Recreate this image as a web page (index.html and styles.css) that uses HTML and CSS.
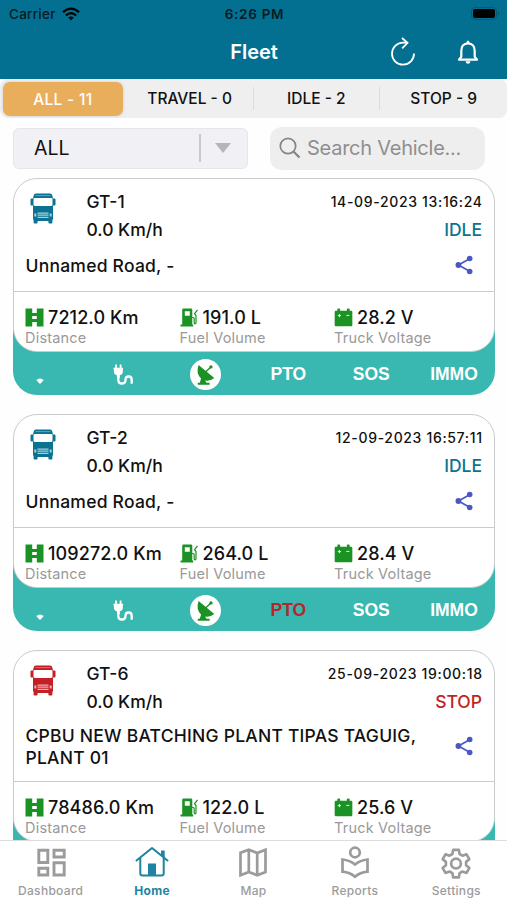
FILE: index.html
```html
<!DOCTYPE html>
<html lang="en">
<head>
  <meta charset="UTF-8">
  <meta name="viewport" content="width=device-width, initial-scale=1.0">
  <title>Fleet</title>
  <link rel="stylesheet" href="styles.css">
</head>
<body>

  <!-- Icons -->
  <svg class="sprite" width="0" height="0">
    <symbol id="i-truck" viewBox="0 0 26 31">
      <path fill="currentColor" d="M6 .5h14q2 0 2.300 2l.7 3h1.500q1 0 1 1v5q0 1-1 1H23v14h-.6v3q0 1-1 1h-2q-1 0-1-1v-1.500H7.600v1.500q0 1-1 1h-2q-1 0-1-1v-3H3v-14H1.500q-1 0-1-1v-5q0-1 1-1H3l.7-3Q4 .5 6 .5z"/>
      <path fill="#fff" d="M4.500 5h17q1 0 1 1v5.500q0 1.500-1.500 1.500H5q-1.500 0-1.500-1.500V6q0-1 1-1z"/>
      <path stroke="#fff" stroke-opacity=".5" stroke-width=".7" d="M5.500 2.600h15"/>
      <path fill="#fff" fill-opacity=".65" d="M7.500 19.500h11v1.200h-11zM7.500 21.600h11v1.200h-11zM7.500 23.700h11v1.200h-11zM4.300 20.500h2v3h-2zM19.700 20.500h2v3h-2z"/>
    </symbol>
    <symbol id="i-share" viewBox="0 0 18 20">
      <path fill="none" stroke="currentColor" stroke-width="1.700" d="M15 3.500 3.500 10 15 16.500"/>
      <circle cx="14.700" cy="3.500" r="2.800" fill="currentColor"/>
      <circle cx="3.400" cy="10" r="2.900" fill="currentColor"/>
      <circle cx="14.700" cy="16.500" r="2.800" fill="currentColor"/>
    </symbol>
    <symbol id="i-road" viewBox="0 0 19 19">
      <path fill="currentColor" d="M.5.5h6.700v18H.5zM11.800.5h6.700v18h-6.700zM7 5h5v3H7zM7 11h5v3H7z"/>
    </symbol>
    <symbol id="i-fuel" viewBox="0 0 19 19">
      <path fill="currentColor" fill-rule="evenodd" d="M3.500.5h7.500q1.300 0 1.300 1.300V16.500h.9v2H.5v-2h1.700V1.800Q2.200.5 3.500.5zM4.800 3.300v4.500h5V3.300z"/>
      <path fill="none" stroke="currentColor" stroke-width="1.200" d="M12 9.500h1.200q1 0 1 1v4q0 1.400.9 1.400t.9-1.400V7.500l-1.500-1.800 3-3.700"/>
    </symbol>
    <symbol id="i-battery" viewBox="0 0 20 20">
      <path fill="currentColor" d="M3.500 3V1.500q0-1 1-1h1q1 0 1 1V3h7V1.500q0-1 1-1h1q1 0 1 1V3H18q1.300 0 1.300 1.300v13.500q0 1.300-1.300 1.300H2Q.7 19.100.7 17.800V4.300Q.7 3 2 3z"/>
      <path stroke="#fff" stroke-width="1" d="M4 8h3.400M5.700 6.300v3.400M13 7.800h3.200"/>
    </symbol>
    <symbol id="i-signal" viewBox="0 0 8 6">
      <path fill="#fff" d="M.3 2Q4-1 7.700 2L4.600 5.500q-.6.500-1.200 0z"/>
    </symbol>
    <symbol id="i-plug" viewBox="0 0 20 21">
      <path fill="#fff" d="M2.100.5h1.800V4H2.100zM6.700.5h1.800V4H6.700zM.5 3.800H10V5.600H9.800v2.200q0 2.800-3 3.500V14H3.900v-2.700Q.9 10.600.9 7.800V5.600H.5z"/>
      <path fill="none" stroke="#fff" stroke-width="2.300" d="M5.300 12.500v3.200q0 3.800 3.600 3.800t3.600-3.800q0-3.200 3.100-3.200t3.100 3.200v4"/>
    </symbol>
    <symbol id="i-dish" viewBox="0 0 30 30">
      <circle cx="15" cy="15" r="15" fill="#fff"/>
      <path fill="#1b9224" d="M8.300 5.800 23.500 18.500Q19 22 14.500 20.800l1.500 2.200h3v2H7.500v-2h2l1.200-4.200Q5.500 14 8.300 5.800z"/>
      <path stroke="#1b9224" stroke-width="1.400" d="m15 12.500 5-4.500"/>
      <circle cx="20.300" cy="7.700" r="1.600" fill="#1b9224"/>
    </symbol>
  </svg>

  <header class="header">
    <div class="status-bar">
      <div class="carrier">Carrier
        <svg width="18" height="14" viewBox="0 0 18 14">
          <path fill="none" stroke="#000" stroke-width="2.300" d="M1 5.200q8-7.200 16 0M3.900 8.300q5.100-4.400 10.200 0"/>
          <path d="M6.200 10.600Q9 8.300 11.800 10.600L9 13.600z"/>
        </svg>
      </div>
      <div class="time">6:26 PM</div>
      <svg class="phone-battery" width="29" height="13" viewBox="0 0 29 13">
        <rect x=".5" y=".5" width="25" height="12" rx="3.500" fill="none" stroke="#035a75"/>
        <rect x="2" y="2" width="22" height="9" rx="2"/>
        <path fill="#034f66" d="M27 4.500q2 2 0 4z"/>
      </svg>
    </div>
    <div class="title-bar">
      <h1 class="title">Fleet</h1>
      <svg width="26" height="30" viewBox="0 0 26 30" fill="none" stroke="#fff" stroke-width="1.800">
        <path d="M24 16.500A11 11 0 1 1 13 5.700h4.300M12 1l5.500 4.800-5.300 5.500"/>
      </svg>
      <svg width="22" height="24" viewBox="0 0 22 24">
        <path fill="none" stroke="#fff" stroke-width="2.200" stroke-linejoin="round" d="M2 19.700h18l-2.300-3V11q0-7.500-6.700-7.500T4.300 11v5.700z"/>
        <path fill="#fff" d="M9.400 3.200q0-2.700 1.600-2.700t1.600 2.700zM8.500 21.300h5q-.5 2.500-2.500 2.500t-2.500-2.500z"/>
      </svg>
    </div>
  </header>

  <nav class="tabs">
    <a class="tab active">ALL - 11</a>
    <a class="tab">TRAVEL - 0</a>
    <a class="tab">IDLE - 2</a>
    <a class="tab">STOP - 9</a>
  </nav>

  <div class="filters">
    <div class="select">
      <span>ALL</span>
      <i class="caret"></i>
    </div>
    <div class="search">
      <svg width="22" height="22" viewBox="0 0 22 22" fill="none" stroke="#858587" stroke-width="1.700">
        <circle cx="9" cy="9" r="7.700"/>
        <path stroke-width="2.200" d="m14.500 14.500 6 6"/>
      </svg>
      <span>Search Vehicle...</span>
    </div>
  </div>

  <main class="list">

    <!-- GT-1 -->
    <section class="vehicle">
      <div class="card">
        <div class="card-top idle">
          <svg class="truck"><use href="#i-truck"/></svg>
          <div class="who"><p>GT-1</p><p>0.0 Km/h</p></div>
          <div class="when"><p class="date">14-09-2023 13:16:24</p><p class="state">IDLE</p></div>
        </div>
        <div class="address">
          <p>Unnamed Road, -</p>
          <svg class="share"><use href="#i-share"/></svg>
        </div>
        <div class="stats">
          <div><p class="value"><svg><use href="#i-road"/></svg>7212.0 Km</p><p class="label">Distance</p></div>
          <div><p class="value"><svg><use href="#i-fuel"/></svg>191.0 L</p><p class="label">Fuel Volume</p></div>
          <div><p class="value"><svg><use href="#i-battery"/></svg>28.2 V</p><p class="label">Truck Voltage</p></div>
        </div>
      </div>
      <div class="flags">
        <span><svg class="signal"><use href="#i-signal"/></svg></span>
        <span><svg class="plug"><use href="#i-plug"/></svg></span>
        <span><svg class="dish"><use href="#i-dish"/></svg></span>
        <span>PTO</span>
        <span>SOS</span>
        <span>IMMO</span>
      </div>
    </section>

    <!-- GT-2 -->
    <section class="vehicle">
      <div class="card">
        <div class="card-top idle">
          <svg class="truck"><use href="#i-truck"/></svg>
          <div class="who"><p>GT-2</p><p>0.0 Km/h</p></div>
          <div class="when"><p class="date">12-09-2023 16:57:11</p><p class="state">IDLE</p></div>
        </div>
        <div class="address">
          <p>Unnamed Road, -</p>
          <svg class="share"><use href="#i-share"/></svg>
        </div>
        <div class="stats">
          <div><p class="value"><svg><use href="#i-road"/></svg>109272.0 Km</p><p class="label">Distance</p></div>
          <div><p class="value"><svg><use href="#i-fuel"/></svg>264.0 L</p><p class="label">Fuel Volume</p></div>
          <div><p class="value"><svg><use href="#i-battery"/></svg>28.4 V</p><p class="label">Truck Voltage</p></div>
        </div>
      </div>
      <div class="flags">
        <span><svg class="signal"><use href="#i-signal"/></svg></span>
        <span><svg class="plug"><use href="#i-plug"/></svg></span>
        <span><svg class="dish"><use href="#i-dish"/></svg></span>
        <span class="on">PTO</span>
        <span>SOS</span>
        <span>IMMO</span>
      </div>
    </section>

    <!-- GT-6 -->
    <section class="vehicle">
      <div class="card">
        <div class="card-top stop">
          <svg class="truck"><use href="#i-truck"/></svg>
          <div class="who"><p>GT-6</p><p>0.0 Km/h</p></div>
          <div class="when"><p class="date">25-09-2023 19:00:18</p><p class="state">STOP</p></div>
        </div>
        <div class="address">
          <p>CPBU NEW BATCHING PLANT TIPAS TAGUIG,<br>PLANT 01</p>
          <svg class="share"><use href="#i-share"/></svg>
        </div>
        <div class="stats">
          <div><p class="value"><svg><use href="#i-road"/></svg>78486.0 Km</p><p class="label">Distance</p></div>
          <div><p class="value"><svg><use href="#i-fuel"/></svg>122.0 L</p><p class="label">Fuel Volume</p></div>
          <div><p class="value"><svg><use href="#i-battery"/></svg>25.6 V</p><p class="label">Truck Voltage</p></div>
        </div>
      </div>
      <div class="flags"></div>
    </section>

  </main>

  <nav class="bottom-nav">
    <a class="nav-item">
      <svg viewBox="0 0 34 34" fill="none" stroke="currentColor" stroke-width="2.900">
        <path d="M4.800 4.300h9v12.200h-9zM20 4.300h10.200v6.700H20zM4.800 22.300h9v6.700h-9zM20 16.800h10.200V29H20z"/>
      </svg>
      <span>Dashboard</span>
    </a>
    <a class="nav-item active">
      <svg viewBox="0 0 34 34" fill="none" stroke="currentColor" stroke-width="2">
        <path stroke-linecap="round" stroke-linejoin="round" d="M1.500 14.500 17 2l15.500 12.500M5.300 12v15.200q0 2.300 2.300 2.300h18.800q2.300 0 2.300-2.300V12"/>
        <path fill="currentColor" stroke="none" d="M13 17.500h8v12h-8zM26 4.500h3.700v8L26 9.500z"/>
      </svg>
      <span>Home</span>
    </a>
    <a class="nav-item">
      <svg viewBox="0 0 34 34" fill="none" stroke="currentColor" stroke-width="2.700">
        <path d="M4.500 6.800v22.400l8.300-3.200 8.400 3.200 8.300-3.200V3.800L21.200 7l-8.400-3.200zM12.800 4v22M21.200 7v22"/>
      </svg>
      <span>Map</span>
    </a>
    <a class="nav-item">
      <svg viewBox="0 0 34 34" fill="none" stroke="currentColor" stroke-width="2.700">
        <circle cx="17" cy="6.500" r="4.800"/>
        <path d="M4.500 13.500q7.500.8 12.500 5 5-4.200 12.500-5v12.200q-7.500.8-12.500 5-5-4.200-12.500-5z"/>
      </svg>
      <span>Reports</span>
    </a>
    <a class="nav-item">
      <svg viewBox="0 0 34 34" fill="none" stroke="currentColor" stroke-width="2.700" stroke-linejoin="round">
        <path d="M14.200 3.800h5.600l.8 4.200 2.900 1.700 4-1.400 2.800 4.900-3.200 2.700v3.400l3.200 2.700-2.800 4.900-4-1.400-2.900 1.700-.8 4.200h-5.600l-.8-4.200-2.900-1.700-4 1.400-2.800-4.900 3.200-2.700v-3.400l-3.200-2.700 2.800-4.900 4 1.400L13.400 8z"/>
        <circle cx="17" cy="17.600" r="4.900"/>
      </svg>
      <span>Settings</span>
    </a>
  </nav>

</body>
</html>
```

FILE: styles.css
```css
* { margin: 0; padding: 0; box-sizing: border-box; }
body {
  height: 900px;
  background: #fefefe;
  font-family: Inter, "Liberation Sans", sans-serif;
  color: #111;
  overflow: hidden;
  display: flex;
  flex-direction: column;
}
.sprite { position: absolute; }
svg { flex: none; }

/* Header */
.header {
  height: 79px;
  flex: none;
  background: #037092;
}
.status-bar {
  height: 27px;
  display: grid;
  grid-template-columns: 1fr auto 1fr;
  align-items: center;
  padding: 0 7px 0 9px;
  font-size: 13.5px;
  color: #061b23;
}
.carrier {
  display: flex;
  align-items: center;
  gap: 6px;
  font-weight: 500;
  letter-spacing: 0.25px;
}
.time {
  font-weight: 600;
  letter-spacing: 0.7px;
}
.phone-battery { justify-self: end; }
.title-bar {
  height: 50px;
  display: flex;
  align-items: center;
}
.title {
  width: 58px;
  margin-left: 225px;
  margin-right: 107px;
  text-align: center;
  font-size: 20px;
  font-weight: 600;
  color: #fff;
}
.title-bar svg + svg { margin-left: 41px; }

/* Status tabs */
.tabs {
  height: 39px;
  flex: none;
  display: grid;
  grid-template-columns: repeat(4, 1fr);
  align-items: center;
  background: #efefef;
  border-radius: 8px;
}
.tab {
  height: 23px;
  line-height: 24px;
  text-align: center;
  font-size: 15.5px;
  font-weight: 500;
  border-right: 1px solid #dcdcdc;
}
.tab:last-child { border: none; }
.tab.active {
  height: 34px;
  line-height: 35px;
  margin: 0 4px 0 3px;
  border: none;
  border-radius: 7px;
  background: #e9ae5c;
  color: #fff;
  letter-spacing: 0.3px;
  box-shadow: 0 0 3px rgba(0, 0, 0, 0.15);
}

/* Filters */
.filters {
  height: 60px;
  flex: none;
  display: flex;
  align-items: center;
  justify-content: space-between;
  padding: 0 22px 0 13px;
}
.select {
  width: 235px;
  height: 41px;
  display: flex;
  align-items: center;
  justify-content: space-between;
  padding-left: 20px;
  border: 1px solid #e6e6ea;
  border-radius: 6px;
  background: #f0f0f5;
  font-size: 19.5px;
}
.caret {
  width: 48px;
  height: 28px;
  display: flex;
  align-items: center;
  padding-left: 14px;
  border-left: 2px solid #c9c9cd;
}
.caret::after {
  content: "";
  border: 8px solid transparent;
  border-top: 10px solid #b5b5b9;
  border-bottom: none;
}
.search {
  width: 215px;
  height: 43px;
  display: flex;
  align-items: center;
  gap: 6px;
  padding-left: 9px;
  border-radius: 12px;
  background: #eee;
  font-size: 20px;
  letter-spacing: -0.25px;
  color: #8e8e90;
}

/* Vehicle cards */
.list {
  flex: 1;
  min-height: 0;
  overflow: hidden;
  padding: 0 12px 0 13px;
}
.vehicle { margin-bottom: 19px; }
.card {
  position: relative;
  background: #fff;
  border: 1.5px solid #c8cccc;
  border-radius: 24px;
}
.card-top {
  height: 65px;
  display: flex;
  padding: 8.5px 12px 0 16px;
  font-size: 17.5px;
  font-weight: 500;
  line-height: 28px;
}
.truck {
  width: 26px;
  height: 31px;
  margin-top: 5px;
}
.who { margin-left: 30.5px; }
.when {
  margin-left: auto;
  text-align: right;
}
.date {
  font-size: 14px;
  letter-spacing: 0.66px;
  margin-right: -0.66px;
}
.idle .truck, .idle .state { color: #0b7392; }
.stop .truck, .stop .state { color: #c31f24; }
.address {
  min-height: 47px;
  display: flex;
  align-items: center;
  justify-content: space-between;
  padding: 9px 21px 13px 11.5px;
  font-size: 17.5px;
  font-weight: 500;
  letter-spacing: 0.23px;
  line-height: 21.5px;
}
.share {
  width: 18px;
  height: 20px;
  margin-top: -2px;
  color: #4a58c4;
}
.stats {
  height: 60px;
  display: grid;
  grid-template-columns: 154.5px 154.5px 1fr;
  padding: 14px 0 0 11px;
  border-top: 1.5px solid #c8cccc;
}
.value {
  display: flex;
  align-items: center;
  gap: 4px;
  height: 22px;
  font-size: 18px;
  font-weight: 500;
  letter-spacing: 0.1px;
}
.value svg {
  width: 19px;
  height: 19px;
  color: #1b9224;
}
.label {
  font-size: 14.5px;
  letter-spacing: 0.2px;
  line-height: 19px;
  color: #999;
}

/* The strip runs up behind the rounded bottom of the card */
.flags {
  height: 67px;
  margin-top: -24px;
  padding: 25px 14px 0 0;
  display: flex;
  align-items: center;
  justify-content: space-between;
  border-radius: 0 0 24px 24px;
  background: #38b8b1;
  color: #fff;
  font-family: "Liberation Sans", sans-serif;
  font-size: 17.5px;
  font-weight: bold;
}
.flags span {
  width: 54px;
  display: flex;
  justify-content: center;
}
.flags .on { color: #b3282b; }
.signal { width: 8px; height: 6px; margin-top: 13px; }
.plug { width: 20px; height: 21px; }
.dish { width: 31px; height: 31px; }

/* Bottom navigation */
.bottom-nav {
  height: 60px;
  flex: none;
  display: grid;
  grid-template-columns: repeat(5, 1fr);
  border-top: 1px solid #dcdcdc;
  background: #fff;
}
.nav-item {
  display: flex;
  flex-direction: column;
  align-items: center;
  padding-top: 5px;
  font-size: 12px;
  font-weight: 500;
  letter-spacing: 0.3px;
  line-height: 21px;
  color: #9b9b9b;
}
.nav-item svg { width: 34px; height: 34px; }
.nav-item.active { color: #1f84a0; font-weight: 700; }
```
